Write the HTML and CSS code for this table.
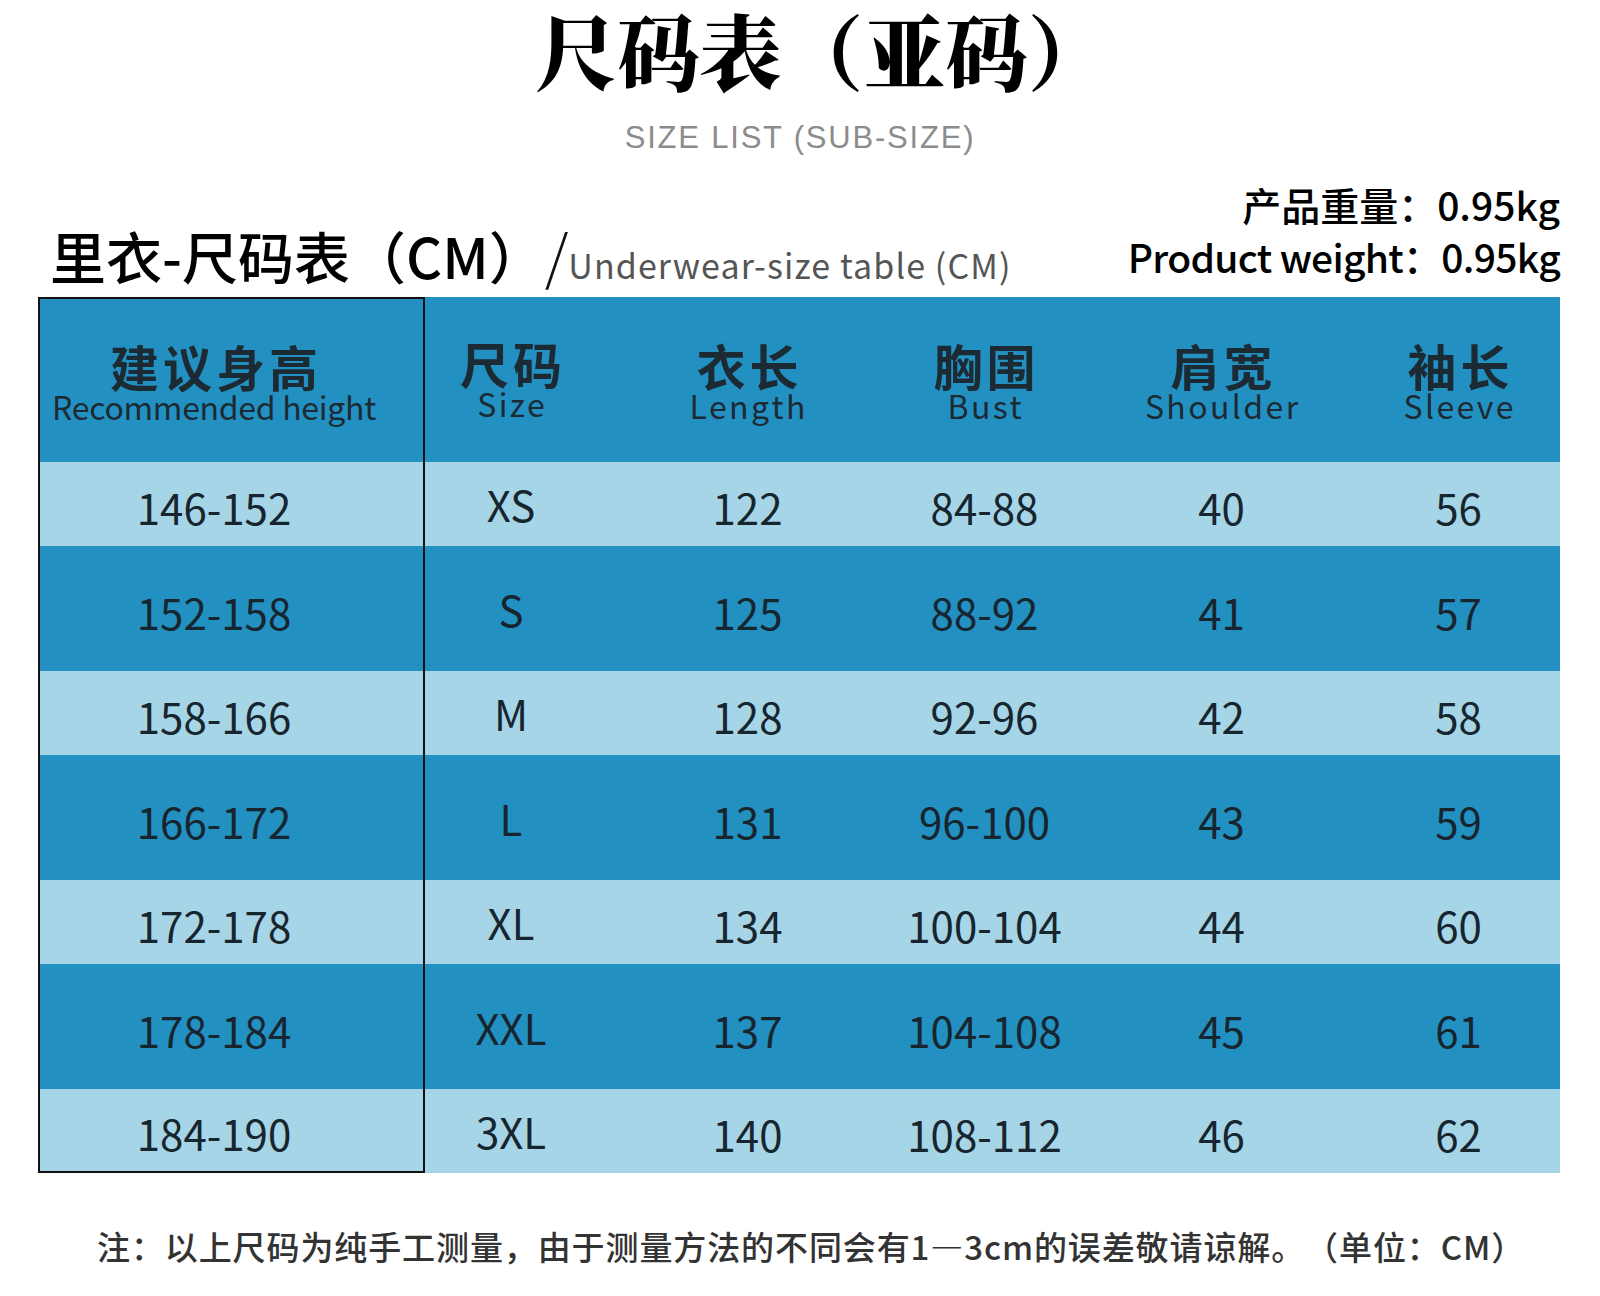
FILE: index.html
```html
<!DOCTYPE html>
<html lang="zh-CN">
<head>
<meta charset="utf-8">
<title>尺码表（亚码）</title>
<link rel="stylesheet" href="styles.css">
</head>
<body>
<div class="page">
  <h1 class="title">尺码表（亚码）</h1>
  <div class="subtitle">SIZE LIST (SUB-SIZE)</div>

  <div class="meta">
    <div class="heading">
      <span class="heading-cn">里衣-尺码表（CM）</span><span class="slash">/</span><span class="heading-en">Underwear-size table (CM)</span>
    </div>
    <div class="weight">
      <div class="weight-line">产品重量：0.95kg</div>
      <div class="weight-line en-line">Product weight：0.95kg</div>
    </div>
  </div>

  <div class="table">
    <div class="row head">
      <div class="cell c1"><span class="cn">建议身高</span><span class="en en-tight">Recommended height</span></div>
      <div class="cell c2"><span class="cn">尺码</span><span class="en">Size</span></div>
      <div class="cell c3"><span class="cn">衣长</span><span class="en">Length</span></div>
      <div class="cell c4"><span class="cn">胸围</span><span class="en">Bust</span></div>
      <div class="cell c5"><span class="cn">肩宽</span><span class="en">Shoulder</span></div>
      <div class="cell c6"><span class="cn">袖长</span><span class="en">Sleeve</span></div>
    </div>
    <div class="row light">
      <div class="cell c1">146-152</div><div class="cell c2">XS</div><div class="cell c3">122</div><div class="cell c4">84-88</div><div class="cell c5">40</div><div class="cell c6">56</div>
    </div>
    <div class="row dark">
      <div class="cell c1">152-158</div><div class="cell c2">S</div><div class="cell c3">125</div><div class="cell c4">88-92</div><div class="cell c5">41</div><div class="cell c6">57</div>
    </div>
    <div class="row light">
      <div class="cell c1">158-166</div><div class="cell c2">M</div><div class="cell c3">128</div><div class="cell c4">92-96</div><div class="cell c5">42</div><div class="cell c6">58</div>
    </div>
    <div class="row dark">
      <div class="cell c1">166-172</div><div class="cell c2">L</div><div class="cell c3">131</div><div class="cell c4">96-100</div><div class="cell c5">43</div><div class="cell c6">59</div>
    </div>
    <div class="row light">
      <div class="cell c1">172-178</div><div class="cell c2">XL</div><div class="cell c3">134</div><div class="cell c4">100-104</div><div class="cell c5">44</div><div class="cell c6">60</div>
    </div>
    <div class="row dark">
      <div class="cell c1">178-184</div><div class="cell c2">XXL</div><div class="cell c3">137</div><div class="cell c4">104-108</div><div class="cell c5">45</div><div class="cell c6">61</div>
    </div>
    <div class="row light last">
      <div class="cell c1">184-190</div><div class="cell c2">3XL</div><div class="cell c3">140</div><div class="cell c4">108-112</div><div class="cell c5">46</div><div class="cell c6">62</div>
    </div>
  </div>

  <p class="note">注：以上尺码为纯手工测量，由于测量方法的不同会有1—3cm的误差敬请谅解。（单位：CM）</p>
</div>
</body>
</html>
```
FILE: styles.css
```css
* { box-sizing: border-box; }

html, body {
  margin: 0;
  padding: 0;
  background: #ffffff;
}

body {
  font-family: "Noto Sans CJK SC", "Noto Sans", sans-serif;
  color: #111;
  text-spacing-trim: space-all;
}

.page {
  width: 1600px;
  height: 1296px;
  overflow: hidden;
}

.title {
  margin: 0;
  padding-left: 45px;
  font-family: "Noto Serif CJK SC", "Noto Sans CJK SC", serif;
  font-size: 82px;
  font-weight: 900;
  line-height: 98px;
  height: 98px;
  text-align: center;
  color: #000;
}

.subtitle {
  margin-top: 25px;
  font-family: "Liberation Sans", Arial, sans-serif;
  font-size: 31px;
  line-height: 30px;
  letter-spacing: 1.8px;
  text-align: center;
  color: #8c8c8c;
}

.meta {
  display: flex;
  justify-content: space-between;
  align-items: flex-end;
  margin-top: 25px;
  padding: 0 40px 0 50px;
  height: 104px;
}

.heading {
  font-size: 56px;
  line-height: 56px;
  margin-bottom: -11px;
  white-space: nowrap;
}

.heading-cn {
  font-size: 56px;
  font-weight: 500;
  color: #000;
}

.slash {
  font-size: 60px;
  font-weight: 300;
  color: #111;
  margin-left: 0;
}

.heading-en {
  font-size: 34px;
  font-weight: 400;
  letter-spacing: 1.1px;
  color: #555;
  margin-left: 0;
}

.weight {
  text-align: right;
  font-size: 39px;
  font-weight: 500;
  line-height: 52px;
  color: #000;
}

.en-line { letter-spacing: -0.7px; }

.table {
  margin: 15px 0 0 38px;
  width: 1522px;
}

.row {
  display: grid;
  grid-template-columns: 387px 204px 237px 237px 237px 220px;
}

.row.head { height: 165px; background: #2390c2; }
.row.light { height: 84px; background: #a6d5e7; }
.row.dark { height: 125px; background: #2390c2; }

.cell {
  display: flex;
  align-items: center;
  justify-content: center;
  font-size: 42px;
  line-height: 42px;
  font-weight: 400;
  color: #17252e;
  padding-top: 6px;
  white-space: nowrap;
}

.c1 {
  border-left: 2px solid #111;
  border-right: 2px solid #111;
  padding-right: 35px;
}
.c2 { padding-right: 32px; padding-top: 0; }
.c6 { padding-left: 17px; }

.head .c1 { border-top: 2px solid #111; }
.last .c1 { border-bottom: 2px solid #111; }

.head .cell {
  flex-direction: column;
  padding-top: 1px;
}
.head .c2 { padding-top: 0; padding-bottom: 3px; }

.head .cn {
  display: block;
  font-size: 49px;
  line-height: 49px;
  font-weight: 700;
  letter-spacing: 4px;
  padding-left: 4px;
  color: #1c2a33;
}

.head .en {
  display: block;
  font-size: 32px;
  line-height: 32px;
  font-weight: 400;
  color: #1c2a33;
  letter-spacing: 2.4px;
  padding-left: 2.4px;
}

.head .en.en-tight {
  letter-spacing: -0.3px;
  padding-left: 0;
}

.note {
  margin: 57px 0 0;
  padding-left: 97px;
  font-size: 33px;
  line-height: 33px;
  font-weight: 500;
  color: #333;
  white-space: nowrap;
  letter-spacing: 0.9px;
}
```
